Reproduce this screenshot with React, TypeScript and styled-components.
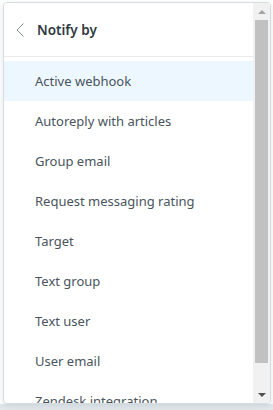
import React from "react";
import styled, { createGlobalStyle } from "styled-components";

const GlobalStyle = createGlobalStyle`
  html, body {
    margin: 0;
    padding: 0;
    background: #ffffff;
  }
  body {
    font-family: "Segoe UI", "Noto Sans", sans-serif;
  }
`;

const Page = styled.div`
  width: 273px;
  height: 410px;
  box-sizing: border-box;
  padding: 2px 2px 0 3px;
  background: linear-gradient(to bottom, #ffffff 404px, #e3e8ec 404px);
  overflow: hidden;
`;

const Popup = styled.div`
  display: flex;
  height: 402px;
  box-sizing: border-box;
  background: #ffffff;
  border: 1px solid #d8dcde;
  border-radius: 4px;
  box-shadow: 0 2px 6px rgba(4, 68, 77, 0.12);
  overflow: hidden;
`;

const Content = styled.div`
  flex: 1;
  overflow: hidden;
`;

const Header = styled.div`
  display: flex;
  align-items: center;
  height: 52px;
  padding-top: 1px;
  padding-left: 11px;
  gap: 12px;
  border-bottom: 1px solid #e9ebed;
  color: #2f3941;
  font-size: 13.5px;
  font-weight: 600;
`;

const List = styled.ul`
  list-style: none;
  margin: 0;
  padding: 4px 0;
`;

const Item = styled.li<{ $active?: boolean }>`
  display: flex;
  align-items: center;
  height: 40px;
  padding-left: 31px;
  background: ${(p) => (p.$active ? "#edf7ff" : "transparent")};
  color: #49545c;
  font-size: 13px;
  white-space: nowrap;
`;

const ScrollBar = styled.div`
  display: flex;
  flex-direction: column;
  align-items: center;
  width: 17px;
  background: #f1f1f1;
`;

const Arrow = styled.div<{ $down?: boolean }>`
  display: flex;
  align-items: center;
  justify-content: center;
  height: 17px;
  width: 100%;
  &::before {
    content: "";
    border-left: 4px solid transparent;
    border-right: 4px solid transparent;
    ${(p) =>
      p.$down
        ? "border-top: 4px solid #505050;"
        : "border-bottom: 4px solid #a3a3a3;"}
  }
`;

const Thumb = styled.div`
  width: 13px;
  height: 343px;
  background: #c1c1c1;
`;

const Track = styled.div`
  flex: 1;
  display: flex;
  flex-direction: column;
  align-items: center;
`;

const Chevron = () => (
  <svg width="10" height="14" viewBox="0 0 10 14" fill="none">
    <path d="M8.5 0.5 L2 7 L8.5 13.5" stroke="#87929d" strokeWidth="1" />
  </svg>
);

const items = [
  "Active webhook",
  "Autoreply with articles",
  "Group email",
  "Request messaging rating",
  "Target",
  "Text group",
  "Text user",
  "User email",
  "Zendesk integration",
];

const App: React.FC = () => {
  return (
    <>
      <GlobalStyle />
      <Page>
        <Popup>
          <Content>
            <Header>
              <Chevron />
              <span>Notify by</span>
            </Header>
            <List>
              {items.map((item, i) => (
                <Item key={item} $active={i === 0}>
                  {item}
                </Item>
              ))}
            </List>
          </Content>
          <ScrollBar>
            <Arrow />
            <Track>
              <Thumb />
            </Track>
            <Arrow $down />
          </ScrollBar>
        </Popup>
      </Page>
    </>
  );
};

export default App;
